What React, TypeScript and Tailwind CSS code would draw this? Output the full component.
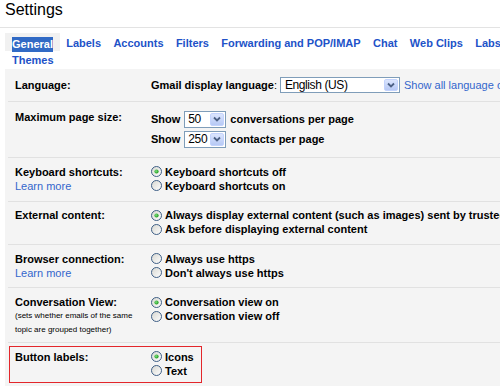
import React from "react";

function Radio({ checked }: { checked?: boolean }) {
  return (
    <svg width="11" height="11" viewBox="0 0 11 11" className="shrink-0">
      <defs>
        <linearGradient id="rg" x1="0" y1="0" x2="1" y2="1">
          <stop offset="0" stopColor="#d6d6d0" />
          <stop offset="1" stopColor="#ffffff" />
        </linearGradient>
        <radialGradient id="dg" cx="0.4" cy="0.4" r="0.6">
          <stop offset="0" stopColor="#7ee07e" />
          <stop offset="1" stopColor="#1d9a1d" />
        </radialGradient>
      </defs>
      <circle cx="5.5" cy="5.5" r="5" fill="url(#rg)" stroke="#3f5f86" strokeWidth="1" />
      {checked && <circle cx="5.5" cy="5.5" r="2.1" fill="url(#dg)" />}
    </svg>
  );
}

function RadioLine({ checked, children }: { checked?: boolean; children: React.ReactNode }) {
  return (
    <div className="flex h-[14px] items-center gap-[3px] whitespace-nowrap font-bold">
      <Radio checked={checked} />
      <span className="leading-[14px]">{children}</span>
    </div>
  );
}

function Arrow() {
  return (
    <div className="m-[1px] flex w-[14px] shrink-0 items-center justify-center rounded-[2px] border border-[#c3d3fd] bg-gradient-to-b from-[#dbe5fd] to-[#b7c9f5]">
      <svg width="8" height="6" viewBox="0 0 8 6">
        <path d="M1 1.5 L4 4.5 L7 1.5" fill="none" stroke="#4d6185" strokeWidth="1.8" />
      </svg>
    </div>
  );
}

function NumSelect({ value }: { value: string }) {
  return (
    <div className="flex h-[17px] w-[42px] shrink-0 border border-[#7f9db9] bg-white">
      <span className="flex-1 pl-[3px] text-[12px] font-normal leading-[15px] tracking-[-0.4px]">{value}</span>
      <Arrow />
    </div>
  );
}

function Row({ children, className }: { children: React.ReactNode; className?: string }) {
  return <div className={"ml-[3px] flex border-b border-[#e1e1e1] pl-[7px] " + (className ?? "")}>{children}</div>;
}

function Label({ children }: { children: React.ReactNode }) {
  return <div className="w-[136px] shrink-0">{children}</div>;
}

export default function App() {
  return (
    <div className="h-[386px] w-[500px] overflow-hidden bg-white font-['Liberation_Sans',Arial,sans-serif] text-[11px] text-black">
      <div className="h-[28px] border-b border-[#e3e3e3] pl-[5px] text-[16px] leading-[20px]">Settings</div>

      <div className="mt-[5px] flex h-[18px] whitespace-nowrap text-[11px] font-bold">
        <div className="ml-[5px] shrink-0 bg-[#f1f1f1] px-[7px] pt-[3px]">
          <span className="inline-block bg-[#316ac5] leading-[15px] text-white">General</span>
        </div>
        {["Labels", "Accounts", "Filters", "Forwarding and POP/IMAP", "Chat", "Web Clips", "Labs"].map((t) => (
          <span key={t} className="shrink-0 px-[6.2px] pt-[3px] leading-[15px] text-[#2152c8]">
            {t}
          </span>
        ))}
      </div>
      <div className="h-[18px] pl-[12px] text-[11px] font-bold leading-[18px] text-[#2152c8]">Themes</div>

      <div className="ml-[5px] bg-[#f4f4f4] pb-[10px]">
        <Row className="h-[33px] items-center">
          <Label>
            <span className="font-bold">Language:</span>
          </Label>
          <div className="flex shrink-0 items-center whitespace-nowrap">
            <span className="font-bold">Gmail display language</span>
            <span>:</span>
            <div className="ml-[3px] flex h-[16px] w-[120px] shrink-0 border border-[#7f9db9] bg-white">
              <span className="flex-1 pl-[4px] text-[12px] leading-[14px] tracking-[-0.4px]">English (US)</span>
              <Arrow />
            </div>
            <span className="ml-[4px] text-[11px] text-[#3366cc]">Show all language options</span>
          </div>
        </Row>

        <Row className="pb-[8px] pt-[7px]">
          <Label>
            <div className="pt-[1px] font-bold leading-[14px]">Maximum page size:</div>
          </Label>
          <div className="flex shrink-0 flex-col font-bold">
            <div className="flex h-[20px] items-center gap-[4px] whitespace-nowrap">
              <span>Show</span>
              <NumSelect value="50" />
              <span>conversations per page</span>
            </div>
            <div className="flex h-[20px] items-center gap-[4px] whitespace-nowrap">
              <span>Show</span>
              <NumSelect value="250" />
              <span>contacts per page</span>
            </div>
          </div>
        </Row>

        <Row className="pb-[8px] pt-[6.5px] leading-[14px]">
          <Label>
            <div className="font-bold">Keyboard shortcuts:</div>
            <div className="text-[#3366cc]">Learn more</div>
          </Label>
          <div className="shrink-0">
            <RadioLine checked>Keyboard shortcuts off</RadioLine>
            <RadioLine>Keyboard shortcuts on</RadioLine>
          </div>
        </Row>

        <Row className="pb-[8px] pt-[6.5px] leading-[14px]">
          <Label>
            <div className="font-bold">External content:</div>
          </Label>
          <div className="shrink-0">
            <RadioLine checked>Always display external content (such as images) sent by trusted senders</RadioLine>
            <RadioLine>Ask before displaying external content</RadioLine>
          </div>
        </Row>

        <Row className="pb-[7.5px] pt-[6.5px] leading-[14px]">
          <Label>
            <div className="font-bold">Browser connection:</div>
            <div className="text-[#3366cc]">Learn more</div>
          </Label>
          <div className="shrink-0">
            <RadioLine>Always use https</RadioLine>
            <RadioLine>Don't always use https</RadioLine>
          </div>
        </Row>

        <Row className="pb-[5px] pt-[7px] leading-[14px]">
          <Label>
            <div className="font-bold">Conversation View:</div>
            <div className="text-[8px] leading-[14px]">(sets whether emails of the same</div>
            <div className="text-[8px] leading-[14px]">topic are grouped together)</div>
          </Label>
          <div className="shrink-0">
            <RadioLine checked>Conversation view on</RadioLine>
            <RadioLine>Conversation view off</RadioLine>
          </div>
        </Row>

        <div className="ml-[4px] mt-[3px] flex w-[193px] border border-[#e3262b] pb-[4px] pl-[5px] pt-[2.5px] leading-[14px]">
          <Label>
            <div className="font-bold">Button labels:</div>
          </Label>
          <div className="shrink-0">
            <RadioLine checked>Icons</RadioLine>
            <RadioLine>Text</RadioLine>
          </div>
        </div>
      </div>
    </div>
  );
}
